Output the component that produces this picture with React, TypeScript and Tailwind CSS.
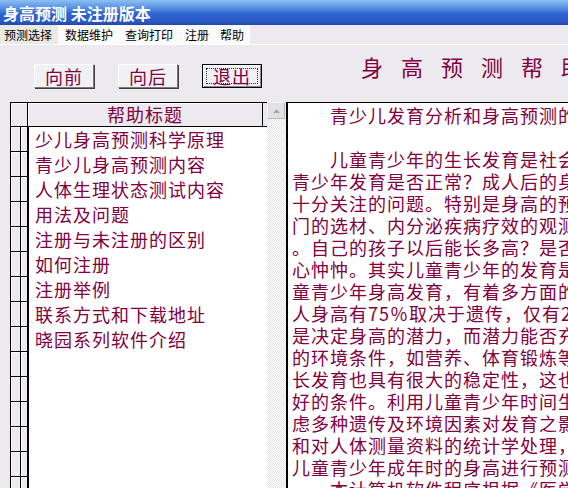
const cjk = { fontFamily: '"Noto Sans CJK SC", "Noto Sans CJK TC", sans-serif' }

const menus = [
  { label: '预测选择', cls: 'pl-[4px] pr-[6px] bg-[#ece9e2]' },
  { label: '数据维护', cls: 'pl-[7px] pr-[6px]' },
  { label: '查询打印', cls: 'pl-[6px] pr-[6px]' },
  { label: '注册', cls: 'pl-[6px] pr-[5px]' },
  { label: '帮助', cls: 'pl-[6px] pr-[6px]' },
]

const topics = [
  '少儿身高预测科学原理',
  '青少儿身高预测内容',
  '人体生理状态测试内容',
  '用法及问题',
  '注册与未注册的区别',
  '如何注册',
  '注册举例',
  '联系方式和下载地址',
  '晓园系列软件介绍',
]

// hard-wrapped like the original memo field, clipped on the right
const lines: { text: string; indent?: boolean }[] = [
  { text: '青少儿发育分析和身高预测的原理', indent: true },
  { text: '' },
  { text: '儿童青少年的生长发育是社会和家庭', indent: true },
  { text: '青少年发育是否正常？成人后的身高是' },
  { text: '十分关注的问题。特别是身高的预测对' },
  { text: '门的选材、内分泌疾病疗效的观测有重' },
  { text: '。自己的孩子以后能长多高？是否会' },
  { text: '心忡忡。其实儿童青少年的发育是有' },
  { text: '童青少年身高发育，有着多方面的因素' },
  { text: '人身高有75％取决于遗传，仅有25％' },
  { text: '是决定身高的潜力，而潜力能否充分发' },
  { text: '的环境条件，如营养、体育锻炼等。' },
  { text: '长发育也具有很大的稳定性，这也为' },
  { text: '好的条件。利用儿童青少年时间生长' },
  { text: '虑多种遗传及环境因素对发育之影响' },
  { text: '和对人体测量资料的统计学处理，可' },
  { text: '儿童青少年成年时的身高进行预测。' },
  { text: '本计算机软件程序根据《医学', indent: true },
]

function Btn({ label, focused }: { label: string; focused?: boolean }) {
  if (focused) {
    return (
      <div className="h-[24px] w-[60px] border border-black bg-[#f1f0f2]">
        <div className="flex h-full w-full items-center justify-center border border-t-white border-l-white border-r-[#8a8a8a] border-b-[#8a8a8a] p-[2px]">
          <div className="flex h-full w-full items-center justify-center border border-dotted border-[#1c3a1c] text-[18px] leading-none tracking-[1px] text-[#800040]">
            {label}
          </div>
        </div>
      </div>
    )
  }
  return (
    <div className="flex h-[24px] w-[60px] items-center justify-center border border-t-white border-l-white border-r-[#7a7a7a] border-b-[#7a7a7a] bg-[#f1f0f2] text-[18px] leading-none tracking-[1px] text-[#800040] shadow-[1px_1px_0_#404040]">
      {label}
    </div>
  )
}

export default function App() {
  return (
    <div className="flex h-[488px] w-[568px] flex-col overflow-hidden bg-[#ece9ef]" style={cjk}>
      {/* title bar */}
      <div className="flex h-[25px] items-center bg-[linear-gradient(to_bottom,#8cc0f2_0%,#5b93e4_30%,#2f63cf_55%,#2b5cc6_85%,#1f47a6_100%)] pl-[3px]">
        <span className="text-[16px] font-bold leading-none text-white">身高预测 未注册版本</span>
      </div>

      {/* menu bar */}
      <div className="flex h-[20px] border-b border-white">
        <div className="flex bg-[#fbfbfb] text-[12px] leading-[19px] text-black">
          {menus.map((m) => (
            <div key={m.label} className={m.cls}>
              {m.label}
            </div>
          ))}
        </div>
      </div>

      {/* toolbar */}
      <div className="flex h-[57px] items-start">
        <div className="ml-[34px] mt-[19px] flex gap-[24px]">
          <Btn label="向前" />
          <Btn label="向后" />
          <Btn label="退出" focused />
        </div>
        <div className="ml-[99px] mt-[8px] h-[26px] whitespace-nowrap text-[22px] leading-[26px] tracking-[18px] text-[#800040]">
          身高预测帮助
        </div>
      </div>

      {/* main */}
      <div className="flex min-h-0 flex-1 pl-[10px]">
        {/* topic grid */}
        <div className="flex w-[257px] flex-col">
          <div className="flex h-[25px] border-t border-b border-black">
            <div className="w-[18px] border-l border-r border-black bg-[#ece9ef] shadow-[inset_1px_1px_0_#fff]" />
            <div className="flex w-[235px] items-center justify-center border-r border-black bg-[#ece9ef] text-[18px] tracking-[1px] text-[#800040] shadow-[inset_1px_1px_0_#fff]">
              帮助标题
            </div>
            <div className="flex-1 bg-[#ece9ef]" />
          </div>
          <div className="flex flex-1">
            <div className="flex w-[18px] flex-col">
              {Array.from({ length: 16 }).map((_, i) => (
                <div key={i} className="flex h-[25px] shrink-0 border-b border-black">
                  <div className="w-[10px] border-l border-black bg-[#ece9ef] shadow-[inset_1px_1px_0_#fff]" />
                  <div className="w-[8px] border-l border-r border-black bg-[#ece9ef] shadow-[inset_1px_1px_0_#fff]" />
                </div>
              ))}
            </div>
            <div className="flex-1 border-l border-black bg-white">
              {topics.map((t) => (
                <div key={t} className="h-[25px] whitespace-nowrap pl-[6px] text-[18px] leading-[25px] tracking-[1px] text-[#800040]">
                  {t}
                </div>
              ))}
            </div>
          </div>
        </div>

        {/* scrollbar */}
        <div className="flex w-[18px] flex-col bg-[repeating-conic-gradient(#e4e4e4_0%_25%,#ffffff_0%_50%)] bg-[length:2px_2px]">
          <div className="flex h-[17px] items-center justify-center border border-[#f4f4f4] border-b-[#b8b8b8] border-r-[#b8b8b8] bg-[#e2e2e4]">
            <svg width="7" height="4" viewBox="0 0 7 4">
              <path d="M3.5 0 L7 4 L0 4 Z" fill="#a8a8b0" />
            </svg>
          </div>
        </div>

        {/* help memo */}
        <div className="ml-[1px] flex-1 overflow-hidden border-t border-l-2 border-black bg-white pl-[4px] pt-[1px]">
          {lines.map((l, i) => (
            <div
              key={i}
              className={
                'h-[22px] whitespace-nowrap text-[18px] leading-[22px] tracking-[1px] text-[#800040]' +
                (l.indent ? ' pl-[38px]' : '')
              }
            >
              {l.text}
            </div>
          ))}
        </div>
      </div>
    </div>
  )
}
